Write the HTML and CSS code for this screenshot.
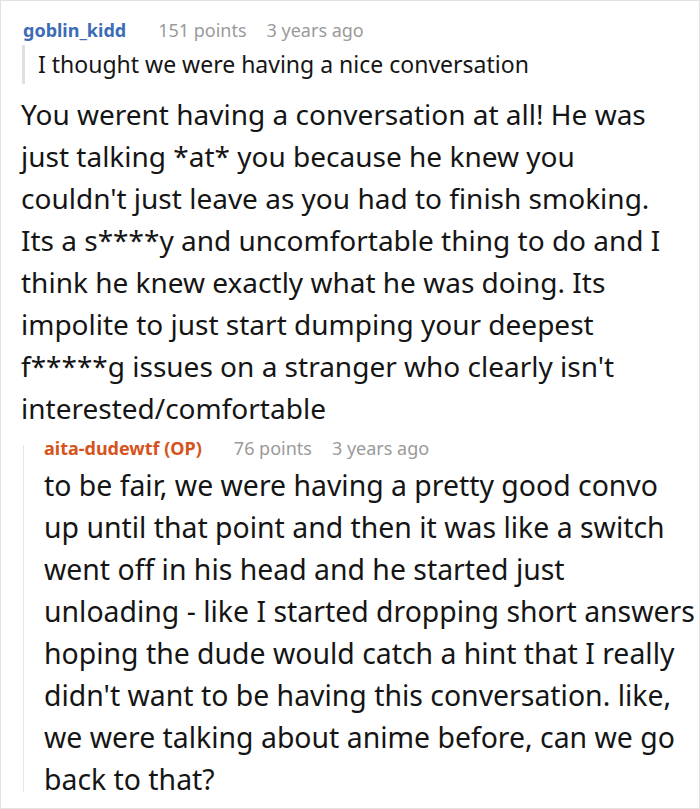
FILE: index.html
```html
<!DOCTYPE html>
<html>
<head>
<meta charset="utf-8">
<link rel="stylesheet" href="styles.css">
</head>
<body>
<div class="frame">
  <div class="comment">
    <div class="meta">
      <span class="user">goblin_kidd</span>
      <span class="info">151 points</span>
      <span class="info">3 years ago</span>
    </div>
    <blockquote class="quote">I thought we were having a nice conversation</blockquote>
    <p class="body main">You werent having a conversation at all! He was just talking *at* you because he knew you couldn't just leave as you had to finish smoking. Its a s****y and uncomfortable thing to do and I think he knew exactly what he was doing. Its impolite to just start dumping your deepest f*****g issues on a stranger who clearly isn't interested/comfortable</p>
    <div class="reply">
      <div class="meta">
        <span class="user op">aita-dudewtf (OP)</span>
        <span class="info">76 points</span>
        <span class="info">3 years ago</span>
      </div>
      <p class="body">to be fair, we were having a pretty good convo<br>up until that point and then it was like a switch<br>went off in his head and he started just<br>unloading - like I started dropping short answers<br>hoping the dude would catch a hint that I really<br>didn't want to be having this conversation. like,<br>we were talking about anime before, can we go<br>back to that?</p>
    </div>
  </div>
</div>
</body>
</html>
```
FILE: styles.css
```css
html, body {
  margin: 0;
  padding: 0;
  background: #fff;
}
body {
  font-family: "Noto Sans", "Open Sans", sans-serif;
  color: #151515;
}
.frame {
  box-sizing: border-box;
  width: 700px;
  height: 809px;
  border: 1px solid #e2e2e2;
  overflow: hidden;
}
.comment {
  padding: 17px 6px 0 22px;
}
.meta {
  display: flex;
  gap: 20px;
  font-size: 18px;
  line-height: 24px;
}
.user {
  font-weight: 700;
  color: #3b6cb5;
  margin-right: 12px;
}
.user.op {
  color: #d5531c;
}
.info {
  color: #9a9a9a;
}
.quote {
  margin: 3px 0 0 -1px;
  border-left: 3px solid #e0e0e0;
  padding: 0 0 0 13px;
  font-size: 23px;
  line-height: 39px;
}
.body {
  margin: 9px 0 0 -2px;
  font-size: 28px;
  line-height: 42px;
}
.body.main {
  margin-right: 16px;
}
.reply {
  display: flex;
  flex-direction: column;
  border-left: 1px solid #e6e6e6;
  margin: 16px 0 0 0;
  padding-left: 20px;
}
.reply .meta {
  margin-top: -9px;
}
.reply .body {
  margin: 4px 0 -8px 0;
  font-size: 28.4px;
  white-space: nowrap;
}
```
